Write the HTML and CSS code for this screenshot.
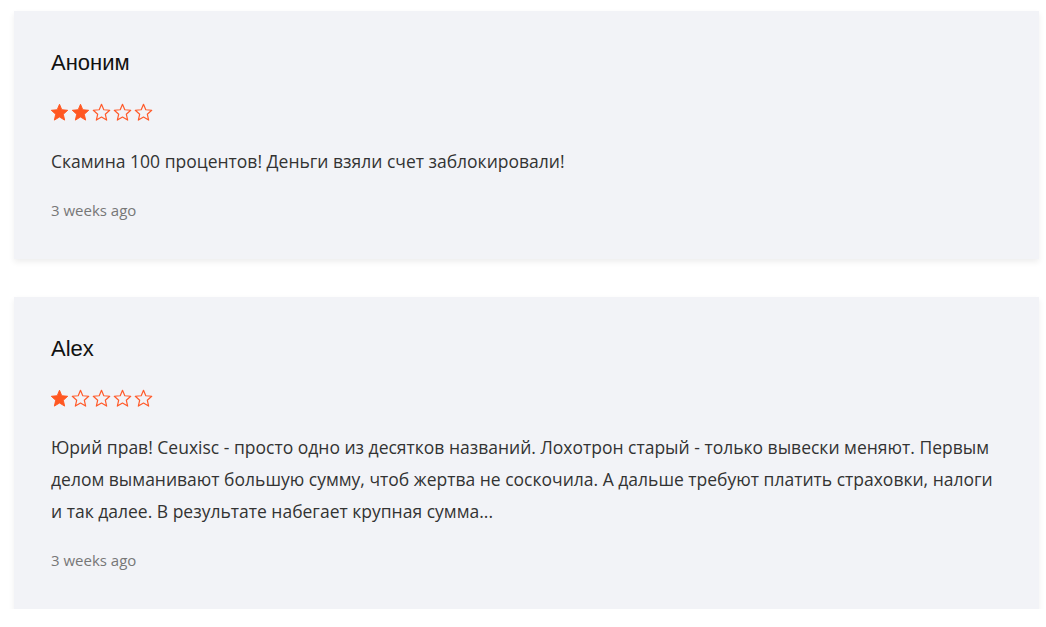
FILE: index.html
```html
<!DOCTYPE html>
<html lang="ru">
<head>
<meta charset="utf-8">
<link rel="stylesheet" href="styles.css">
</head>
<body>
<svg width="0" height="0" class="defs">
  <defs>
    <polygon id="star" points="12,1.6 14.9,8.5 22.4,9.2 16.8,14.2 18.5,21.6 12,17.7 5.5,21.6 7.2,14.2 1.6,9.2 9.1,8.5"/>
  </defs>
</svg>
<div class="reviews">
  <div class="card">
    <div class="name">Аноним</div>
    <div class="stars">
      <svg class="star full" viewBox="0 0 24 24"><use href="#star"/></svg>
      <svg class="star full" viewBox="0 0 24 24"><use href="#star"/></svg>
      <svg class="star empty" viewBox="0 0 24 24"><use href="#star"/></svg>
      <svg class="star empty" viewBox="0 0 24 24"><use href="#star"/></svg>
      <svg class="star empty" viewBox="0 0 24 24"><use href="#star"/></svg>
    </div>
    <p class="text">Скамина 100 процентов! Деньги взяли счет заблокировали!</p>
    <div class="time">3 weeks ago</div>
  </div>
  <div class="card">
    <div class="name">Alex</div>
    <div class="stars">
      <svg class="star full" viewBox="0 0 24 24"><use href="#star"/></svg>
      <svg class="star empty" viewBox="0 0 24 24"><use href="#star"/></svg>
      <svg class="star empty" viewBox="0 0 24 24"><use href="#star"/></svg>
      <svg class="star empty" viewBox="0 0 24 24"><use href="#star"/></svg>
      <svg class="star empty" viewBox="0 0 24 24"><use href="#star"/></svg>
    </div>
    <p class="text">Юрий прав! Ceuxisc - просто одно из десятков названий. Лохотрон старый - только вывески меняют. Первым делом выманивают большую сумму, чтоб жертва не соскочила. А дальше требуют платить страховки, налоги и так далее. В результате набегает крупная сумма...</p>
    <div class="time">3 weeks ago</div>
  </div>
</div>
</body>
</html>
```
FILE: styles.css
```css
html, body {
  margin: 0;
  padding: 0;
  background: #ffffff;
}
.defs {
  position: absolute;
  width: 0;
  height: 0;
}
.reviews {
  width: 1025px;
  padding: 11px 0 0 14px;
  display: flex;
  flex-direction: column;
  gap: 38px;
}
.card {
  background: #f2f3f7;
  box-shadow: 0 3px 6px rgba(0, 0, 0, 0.07);
  padding: 36px 37px 35px 37px;
  display: flex;
  flex-direction: column;
}
.name {
  font-family: "Liberation Sans", Arial, sans-serif;
  font-size: 22px;
  line-height: 32px;
  color: #111111;
}
.stars {
  display: flex;
  gap: 4px;
  margin-top: 24px;
  height: 19px;
}
.star {
  width: 19px;
  height: 19px;
  margin-left: -1px;
  margin-right: -1px;
}
.star.full use {
  fill: #ff5722;
  stroke: #ff5722;
  stroke-width: 1.2;
  stroke-linejoin: round;
}
.star.empty use {
  fill: none;
  stroke: #ff5a2a;
  stroke-width: 1.5;
  stroke-linejoin: round;
}
.text {
  margin: 23px 0 0 0;
  font-family: "Open Sans", sans-serif;
  font-size: 17.5px;
  line-height: 32px;
  color: #333333;
}
.time {
  margin-top: 19px;
  font-family: "Open Sans", sans-serif;
  font-size: 15px;
  line-height: 28px;
  color: #777777;
}
```
